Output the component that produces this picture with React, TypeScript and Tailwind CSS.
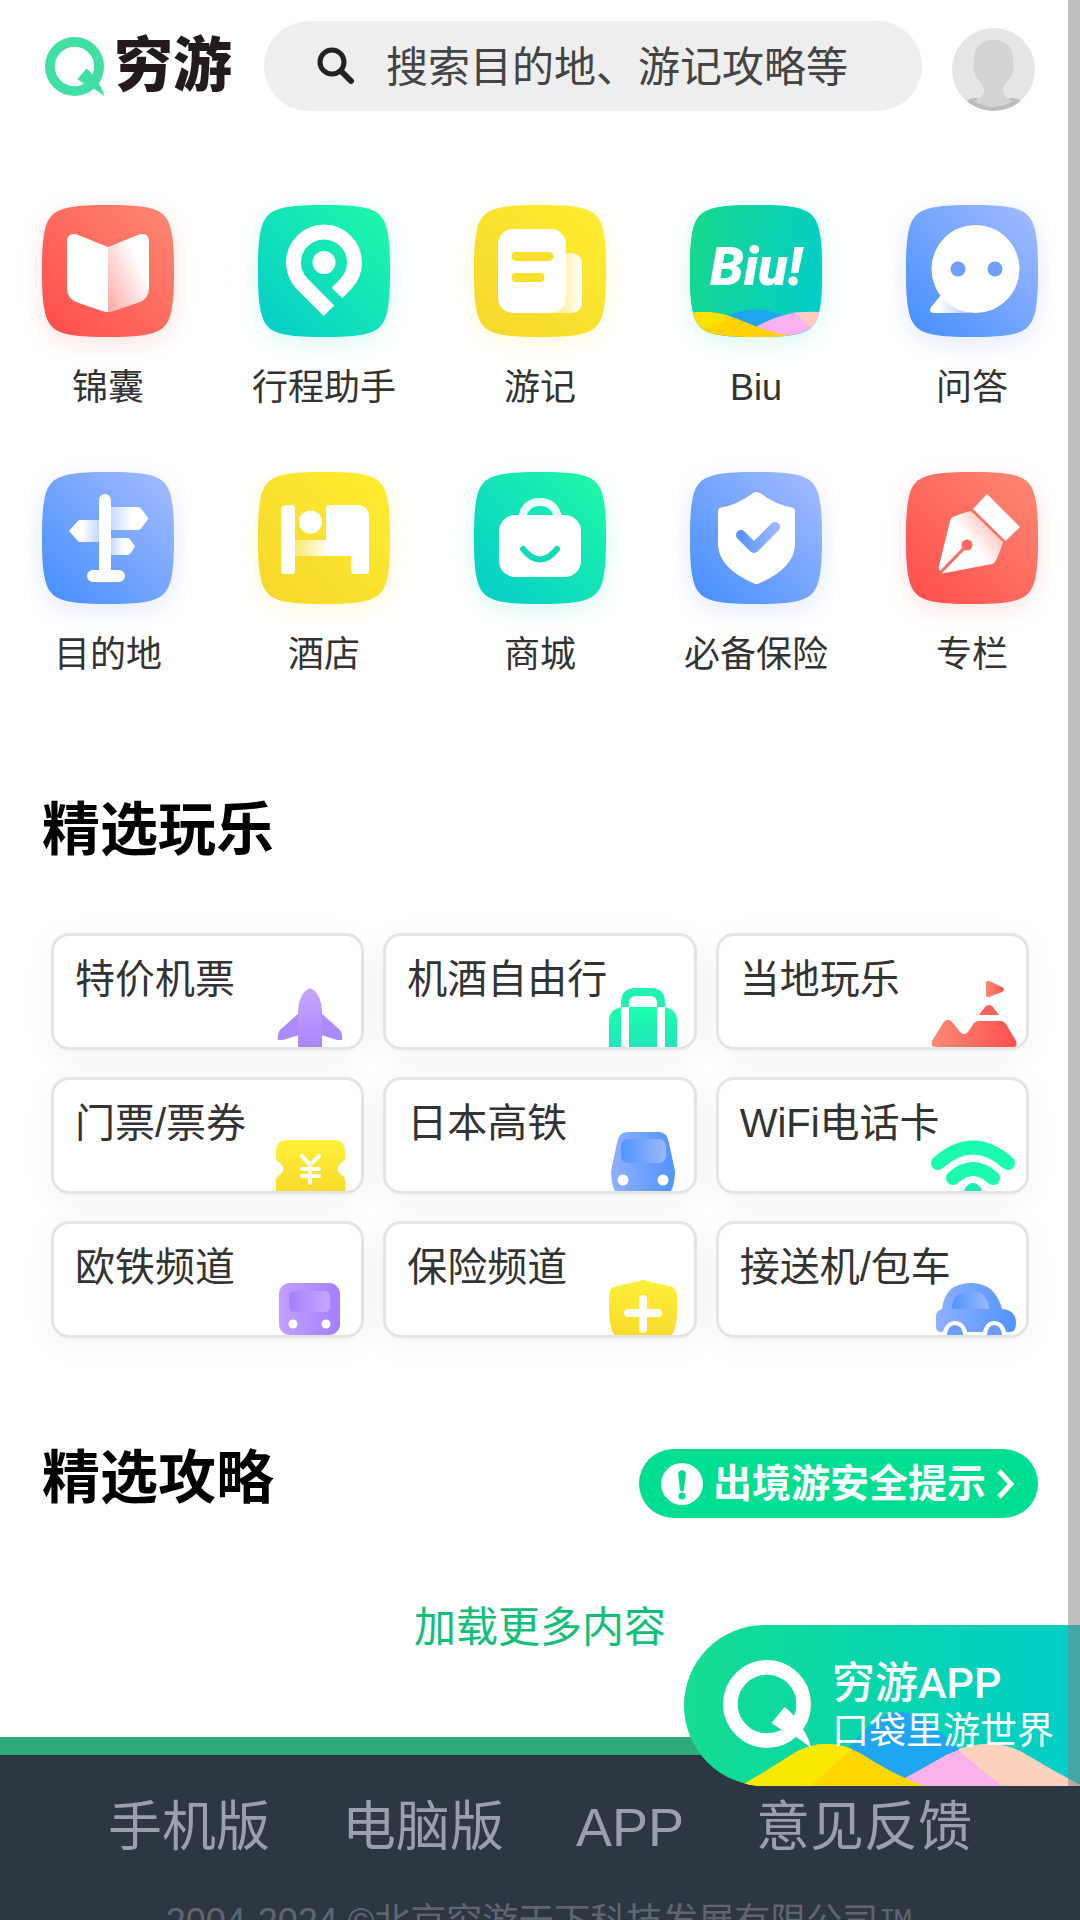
import { useState, type ReactNode } from 'react'

const SQUIRCLE =
  'M66 0C82 0 94 0.5 102 2C120 4.5 127.5 12 130 30C131.5 38 132 50 132 66C132 82 131.5 94 130 102C127.5 120 120 127.5 102 130C94 131.5 82 132 66 132C50 132 38 131.5 30 130C12 127.5 4.5 120 2 102C0.5 94 0 82 0 66C0 50 0.5 38 2 30C4.5 12 12 4.5 30 2C38 0.5 50 0 66 0Z'

const TONES = {
  red: { from: '#ff4b4b', to: '#fd8a72', shadow: 'drop-shadow-[0_6px_12px_rgba(255,75,75,0.16)]' },
  green: { from: '#06cbcb', to: '#1ffaa6', shadow: 'drop-shadow-[0_6px_12px_rgba(10,220,180,0.16)]' },
  yellow: { from: '#f6d52c', to: '#ffee30', shadow: 'drop-shadow-[0_6px_12px_rgba(250,220,40,0.18)]' },
  blue: { from: '#438eff', to: '#a5bcff', shadow: 'drop-shadow-[0_6px_12px_rgba(80,110,255,0.16)]' },
}

type Tone = keyof typeof TONES

const ENTRIES: Array<{ key: string; label: string; tone: Tone; art: ReactNode }> = [
  {
    key: 'guide',
    label: '锦囊',
    tone: 'red',
    art: (
      <>
        <defs>
          <linearGradient id="book-page" x1="0.1" y1="0.9" x2="0.9" y2="0.2">
            <stop offset="0" stopColor="#ffb4b2" />
            <stop offset="0.8" stopColor="#fff" />
          </linearGradient>
        </defs>
        <path d="M66 42L35 29.500Q25 27 25 37V83Q25 93 34 97L60 106Q63 107 66 107Z" fill="#fff" />
        <path d="M66 42L97 29.500Q107 27 107 37V83Q107 93 98 97L72 106Q69 107 66 107Z" fill="url(#book-page)" />
      </>
    ),
  },
  {
    key: 'plan',
    label: '行程助手',
    tone: 'green',
    art: (
      <>
        <path d="M79 88L87.6 79.1A30.500 30.500 0 1 0 44.4 79.1L71 105.7" fill="none" stroke="#fff" strokeWidth="15" />
        <circle cx="66" cy="57.500" r="11.500" fill="#fff" />
      </>
    ),
  },
  {
    key: 'notes',
    label: '游记',
    tone: 'yellow',
    art: (
      <>
        <defs>
          <linearGradient id="note-back" x1="0" x2="1">
            <stop offset="0.45" stopColor="#fff0a0" />
            <stop offset="1" stopColor="#fff" />
          </linearGradient>
        </defs>
        <rect x="70" y="48" width="38" height="60" rx="10" fill="url(#note-back)" />
        <rect x="24" y="24" width="68" height="84" rx="15" fill="#fff" />
        <path d="M42 51.500H75M42 72.500H66" stroke="#f9df2b" strokeWidth="9" strokeLinecap="round" />
      </>
    ),
  },
  {
    key: 'biu',
    label: 'Biu',
    tone: 'green',
    art: (
      <>
        <defs>
          <linearGradient id="biu-bg" x1="0" y1="0.4" x2="1" y2="0.6">
            <stop offset="0" stopColor="#16d88f" />
            <stop offset="1" stopColor="#06cdc9" />
          </linearGradient>
          <clipPath id="biu-clip">
            <path d={SQUIRCLE} />
          </clipPath>
        </defs>
        <g clipPath="url(#biu-clip)">
          <path d="M0 0H132V132H0Z" fill="url(#biu-bg)" />
          <path d="M34 112Q64 97 98 112L70 126Z" fill="#1ea6ee" />
          <path d="M62 124Q92 107 114 107H132V132H80Z" fill="#fbb0f0" />
          <path d="M104 108Q118 106 132 107V132L118 120Q111 113 104 108Z" fill="#fdccc0" />
          <path d="M0 108Q22 105 42 112C64 120 80 129 108 132H0Z" fill="#ffd200" />
          <path d="M0 108Q22 105 42 112Q28 122 8 124Z" fill="#fbe000" />
        </g>
        <text
          x="66"
          y="80"
          textAnchor="middle"
          fill="#fff"
          className="font-['Roboto',sans-serif] text-[54px] font-black italic"
        >
          Biu!
        </text>
      </>
    ),
  },
  {
    key: 'ask',
    label: '问答',
    tone: 'blue',
    art: (
      <>
        <defs>
          <linearGradient id="ask-tail" x1="0" x2="1">
            <stop offset="0.2" stopColor="#fff" />
            <stop offset="1" stopColor="#a9c8ff" />
          </linearGradient>
        </defs>
        <path d="M35 90L25 102Q22 108 29 108H64Z" fill="url(#ask-tail)" />
        <circle cx="69.500" cy="64" r="44" fill="#fff" />
        <circle cx="52" cy="64" r="7.500" fill="#6f9ffb" />
        <circle cx="89" cy="64" r="7.500" fill="#6f9ffb" />
      </>
    ),
  },
  {
    key: 'place',
    label: '目的地',
    tone: 'blue',
    art: (
      <>
        <defs>
          <linearGradient id="sign-right" x1="0" x2="1">
            <stop offset="0" stopColor="#fff" stopOpacity="0.5" />
            <stop offset="0.6" stopColor="#fff" />
          </linearGradient>
          <linearGradient id="sign-left" x1="1" x2="0">
            <stop offset="0" stopColor="#fff" stopOpacity="0.5" />
            <stop offset="0.6" stopColor="#fff" />
          </linearGradient>
        </defs>
        <path d="M66 35H96Q98 35 99.500 37L106.500 46.500L99.500 56Q98 58 96 58H66Z" fill="url(#sign-right)" />
        <path d="M66 66H86Q88 66 93 74.500Q88 83 86 83H66Z" fill="url(#sign-right)" />
        <path d="M60 48H38Q36 48 35 50L27 59L35 68Q36 70 38 70H60Z" fill="url(#sign-left)" />
        <path d="M63 28V100M51 104H77" stroke="#fff" strokeWidth="12" strokeLinecap="round" />
      </>
    ),
  },
  {
    key: 'hotel',
    label: '酒店',
    tone: 'yellow',
    art: (
      <>
        <defs>
          <linearGradient id="bed-base" x1="0" x2="1">
            <stop offset="0" stopColor="#fae868" />
            <stop offset="1" stopColor="#fff" />
          </linearGradient>
        </defs>
        <path d="M36 68H72V84H36Z" fill="url(#bed-base)" />
        <path d="M23 36Q25 33 30 33H34Q37 33 37 36V99Q37 102 34 102H26Q23 102 23 99Z" fill="#fff" />
        <circle cx="52.500" cy="50" r="11.500" fill="#fff" />
        <path d="M68 68V36Q68 33 72 33H98Q111 33 111 45V99Q111 102 108 102H96Q93 102 93 99V84H68Z" fill="#fff" />
      </>
    ),
  },
  {
    key: 'mall',
    label: '商城',
    tone: 'green',
    art: (
      <>
        <path d="M48 50V46Q51 30 66 30Q81 30 84 46V50" fill="none" stroke="#fff" strokeOpacity="0.9" strokeWidth="8" />
        <rect x="25" y="43" width="82" height="62" rx="16" fill="#fff" />
        <path d="M49 77Q66 98 83 77" fill="none" stroke="#11dbb6" strokeWidth="6" strokeLinecap="round" />
      </>
    ),
  },
  {
    key: 'insure',
    label: '必备保险',
    tone: 'blue',
    art: (
      <>
        <defs>
          <linearGradient id="check-line" x1="0" x2="1">
            <stop offset="0" stopColor="#5996ff" />
            <stop offset="1" stopColor="#9bb6ff" />
          </linearGradient>
        </defs>
        <path
          d="M63 21Q66.500 19 70 21Q86 33 102 35.500Q105 36 105 39V73Q104 96 70 111Q66.500 113 63 111Q29 96 28 73V39Q28 36 31 35.500Q47 33 63 21Z"
          fill="#fff"
        />
        <path d="M51 63L64 76L85 55" fill="none" stroke="url(#check-line)" strokeWidth="10" strokeLinecap="round" strokeLinejoin="round" />
      </>
    ),
  },
  {
    key: 'column',
    label: '专栏',
    tone: 'red',
    art: (
      <>
        <defs>
          <linearGradient id="nib" x1="0.95" y1="0.15" x2="0.5" y2="0.5">
            <stop offset="0" stopColor="#ffb3ad" />
            <stop offset="1" stopColor="#fff" />
          </linearGradient>
        </defs>
        <path d="M65 39Q53 42 47 45Q45 46 44 49L33 94Q32 97 34.500 99.500L36 101.500L86 92Q88 91.500 89 90Q95 78 97 70Z" fill="url(#nib)" />
        <path d="M81 22L114 55L99.500 69L67 37Z" fill="#fff" />
        <path d="M34 101L61 73" stroke="#fd6a60" strokeWidth="3" />
        <circle cx="61" cy="73" r="5.500" fill="#fd6a60" />
      </>
    ),
  },
]

// card art sits in a 102x70 box glued to the bottom right corner
const CHANNELS: Array<{ key: string; label: string; art: ReactNode }> = [
  {
    key: 'flight',
    label: '特价机票',
    art: (
      <>
        <path d="M40 36L21 53Q18 57 19 63H24L40 58ZM62 36L81 53Q84 57 83 63H78L62 58Z" fill="#ad8bff" />
        <path d="M39 70V34Q40 16 51 11Q62 16 63 34V70Z" fill="url(#purple-v)" />
      </>
    ),
  },
  {
    key: 'package',
    label: '机酒自由行',
    art: (
      <>
        <path d="M33 30V26Q33 15 44 15H58Q69 15 69 26V30" fill="none" stroke="#1ff3b0" strokeWidth="8" />
        <path d="M29 30V70H17V43Q17 33 29 30ZM37 30H65V70H37ZM73 30Q85 33 85 43V70H73Z" fill="url(#green-v)" />
      </>
    ),
  },
  {
    key: 'local',
    label: '当地玩乐',
    art: (
      <>
        <path d="M62 6Q62 3 65 4L78 10Q82 12.500 78 15L65 20Q62 21 62 18Z" fill="url(#red-h)" />
        <path d="M55 38L61 30Q65 26 69 30L75 38Z" fill="#fc6158" />
        <path d="M8 64L19 46Q23 40 28 45L36 55Q40 59 44 55L50 46Q52 44 55 44H77Q80 44 82 47L92 64Q94 70 89 70H12Q6 70 8 64Z" fill="url(#red-h)" />
      </>
    ),
  },
  {
    key: 'ticket',
    label: '门票/票券',
    art: (
      <>
        <path
          d="M17 70V60Q17 55 21 54Q28 48 21 42Q17 40 17 36V31Q17 19 28 19H75Q86 19 86 31V36Q86 40 82 42Q75 48 82 54Q86 55 86 60V70Z"
          fill="url(#yellow-v)"
        />
        <path d="M43 35L51 44L60 35M43 48H60M43 55H60M51 45V62" fill="none" stroke="#fff" strokeWidth="4" strokeLinecap="round" />
      </>
    ),
  },
  {
    key: 'jrail',
    label: '日本高铁',
    art: (
      <>
        <path d="M25 22Q27 11 35 11H67Q75 11 77 22L83 50Q83 62 79 70H23Q19 62 19 50Z" fill="url(#blue-h)" />
        <rect x="29" y="18" width="45" height="24" rx="7" fill="url(#blue-glass)" />
        <circle cx="31" cy="59" r="5.500" fill="#fff" />
        <circle cx="71" cy="59" r="5.500" fill="#fff" />
      </>
    ),
  },
  {
    key: 'wifi',
    label: 'WiFi电话卡',
    art: (
      <>
        <path d="M14 42Q49 11 84 42M29 57Q49 39 69 57" fill="none" stroke="#1bfbae" strokeWidth="14" strokeLinecap="round" />
        <path d="M40 70Q43 62 49 62Q55 62 58 70Z" fill="#1be9b6" />
      </>
    ),
  },
  {
    key: 'erail',
    label: '欧铁频道',
    art: (
      <>
        <rect x="20" y="18" width="61" height="52" rx="11" fill="url(#purple-h)" />
        <rect x="30" y="26" width="41" height="21" rx="5" fill="url(#purple-glass)" />
        <circle cx="34" cy="59" r="4.500" fill="#fff" />
        <circle cx="67" cy="59" r="4.500" fill="#fff" />
      </>
    ),
  },
  {
    key: 'cover',
    label: '保险频道',
    art: (
      <>
        <path d="M47 16Q51 14 55 16L77 21Q85 22 85 31V46Q85 60 80 70H22Q17 60 17 46V31Q17 22 25 21Z" fill="url(#yellow-v)" />
        <path d="M51 34V64M36 48H66" stroke="#fff" strokeWidth="8" strokeLinecap="round" />
      </>
    ),
  },
  {
    key: 'car',
    label: '接送机/包车',
    art: (
      <>
        <path d="M18 44Q21 18 47 18Q71 18 78 44Q92 45 92 58Q92 67 86 67H18Q12 67 12 62V51Q12 46 18 44Z" fill="url(#blue-h)" />
        <path d="M28 44Q28 28 44 27H52Q64 29 65 44Z" fill="url(#blue-glass)" />
        <path d="M18 70Q21 56 31 56Q41 56 44 70ZM58 70Q61 56 70 56Q80 56 83 70Z" fill="#fff" />
        <path d="M23 70Q24 60 31 60Q38 60 39 70ZM63 70Q64 60 70 60Q77 60 78 70Z" fill="#6e9dff" />
      </>
    ),
  },
]

const FOOT_LINKS = ['手机版', '电脑版', 'APP', '意见反馈']

function SharedGradients() {
  const defs = [
    { id: 'purple-v', a: '#c6a6ff', b: '#aa86ff', v: true },
    { id: 'green-v', a: '#1bffac', b: '#22e3bb', v: true },
    { id: 'yellow-v', a: '#fff03a', b: '#f8db2b', v: true },
    { id: 'red-h', a: '#fc8a74', b: '#ff5050', v: false },
    { id: 'blue-h', a: '#8fb0ff', b: '#5094ff', v: false },
    { id: 'blue-glass', a: '#5094ff', b: '#9ab8ff', v: false },
    { id: 'purple-h', a: '#c2a0ff', b: '#a47fff', v: false },
    { id: 'purple-glass', a: '#a680ff', b: '#c6a6ff', v: false },
  ]
  return (
    <svg className="absolute size-0" aria-hidden="true">
      <defs>
        {defs.map(d => (
          <linearGradient key={d.id} id={d.id} x1="0" y1="0" x2={d.v ? 0 : 1} y2={d.v ? 1 : 0}>
            <stop offset="0" stopColor={d.a} />
            <stop offset="1" stopColor={d.b} />
          </linearGradient>
        ))}
      </defs>
    </svg>
  )
}

function QMark({ className }: { className: string }) {
  return (
    <svg viewBox="0 0 60 60" className={className} aria-hidden="true">
      <circle cx="30" cy="30" r="25" fill="none" stroke="currentColor" strokeWidth="10" />
      <path d="M42 32L33 43Q38 47 45 50Q53 54 60 60Q58 50 51 43Q50 38 42 32Z" fill="currentColor" />
    </svg>
  )
}

function Tile({ tone, id, children }: { tone: Tone; id: string; children: ReactNode }) {
  const t = TONES[tone]
  return (
    <svg viewBox="0 0 132 132" className={`size-[132px] overflow-visible ${t.shadow}`} aria-hidden="true">
      <defs>
        <linearGradient id={`bg-${id}`} x1="0" y1="1" x2="1" y2="0">
          <stop offset="0" stopColor={t.from} />
          <stop offset="1" stopColor={t.to} />
        </linearGradient>
      </defs>
      <path d={SQUIRCLE} fill={`url(#bg-${id})`} />
      {children}
    </svg>
  )
}

function Header() {
  const [keyword, setKeyword] = useState('')
  return (
    <header className="flex items-center px-[45px] pt-[21px]">
      <a href="#home" className="flex shrink-0 items-center gap-[10px]">
        <QMark className="size-[59px] text-[#40e0a5]" />
        <span className="text-[59px] leading-[90px] font-black text-[#231a1c]">穷游</span>
      </a>
      <label className="ml-8 flex h-[90px] flex-1 items-center gap-[31px] rounded-full bg-[#eeeeee] pl-[53px]">
        <svg viewBox="0 0 38 38" className="size-[38px] shrink-0" fill="none" stroke="#222" aria-hidden="true">
          <circle cx="15" cy="15" r="12" strokeWidth="5" />
          <path d="M24 24L34 34" strokeWidth="6" strokeLinecap="round" />
        </svg>
        <input
          type="search"
          aria-label="搜索"
          value={keyword}
          onChange={e => setKeyword(e.target.value)}
          placeholder="搜索目的地、游记攻略等"
          className="w-full min-w-0 bg-transparent pt-0.5 text-[42px] text-[#444] outline-none placeholder:text-[#444]"
        />
      </label>
      <a href="#me" aria-label="我的" className="ml-[30px] shrink-0 self-end">
        <svg viewBox="0 0 84 84" className="block size-[83px]" aria-hidden="true">
          <defs>
            <clipPath id="avatar">
              <circle cx="42" cy="42" r="42" />
            </clipPath>
          </defs>
          <g clipPath="url(#avatar)">
            <path d="M0 0H84V84H0Z" fill="#e5e5e5" />
            <path d="M14 74Q20 70 26 71Q42 86 58 71Q64 70 70 74V84H14Z" fill="#bdbdbd" />
            <path d="M42 12Q62 13 62 34Q64 46 57 53Q50 60 52 66Q55 72 62 74Q42 86 22 74Q29 72 32 66Q34 60 27 53Q20 46 22 34Q22 13 42 12Z" fill="#d3d3d3" />
          </g>
        </svg>
      </a>
    </header>
  )
}

function AppBanner() {
  return (
    <a
      href="#app"
      className="fixed right-0 bottom-[134px] flex h-[161px] w-[396px] items-start overflow-hidden rounded-l-full bg-linear-to-r from-[#15dd90] to-[#06cdca] text-white"
    >
      <svg viewBox="0 0 396 161" className="absolute inset-0 size-full" aria-hidden="true">
        <path d="M160 128Q192 87 216 87Q240 87 278 128L222 156Z" fill="#1ea6f2" />
        <path d="M205 161Q222 153 262 130Q286 119 304 119Q322 119 336 126Q366 144 396 160V161Z" fill="#fbb2ea" />
        <path d="M274 124Q290 119 304 119Q322 119 336 126Q366 144 396 160V161H318Q298 146 274 124Z" fill="#fdd2bd" />
        <path d="M56 161Q76 150 104 132Q122 119 142 119Q160 119 176 128Q210 150 240 161Z" fill="#ffd600" />
        <path d="M56 161Q76 150 104 132Q122 119 142 119Q156 119 168 124L126 161Z" fill="#fbe800" />
      </svg>
      <QMark className="relative mt-[35px] ml-[39px] size-[88px] shrink-0" />
      <span className="relative mt-8 ml-[21px] font-['Roboto','Noto_Sans_CJK_SC',sans-serif] whitespace-nowrap">
        <span className="block text-[43px] leading-[52px] font-medium">穷游APP</span>
        <span className="block text-[37px] leading-[46px]">口袋里游世界</span>
      </span>
    </a>
  )
}

export default function App() {
  return (
    <div className="h-screen overflow-hidden bg-white font-['Liberation_Sans','Noto_Sans_CJK_SC',sans-serif] text-[#333]">
      <SharedGradients />
      <Header />

      <nav aria-label="频道" className="mt-[94px] grid grid-cols-5 gap-y-[57px]">
        {ENTRIES.map(e => (
          <a key={e.key} href={`#${e.key}`} className="flex flex-col items-center">
            <Tile tone={e.tone} id={e.key}>
              {e.art}
            </Tile>
            <span className="mt-6 text-[36px] leading-[54px]">{e.label}</span>
          </a>
        ))}
      </nav>

      <section className="mt-[108px]">
        <h2 className="px-[42px] text-[58px] leading-[80px] font-bold text-black">精选玩乐</h2>
        <div className="mt-[63px] grid grid-cols-3 gap-x-[19px] gap-y-[27px] px-[51px]">
          {CHANNELS.map(c => (
            <a
              key={c.key}
              href={`#${c.key}`}
              className="relative h-[117px] rounded-[18px] border-3 border-[#e4e4e4] bg-white pt-[13px] pl-[21px] shadow-[0_6px_36px_rgba(0,0,0,0.05)]"
            >
              <svg viewBox="0 0 102 70" className="absolute right-0 bottom-0 h-[70px] w-[102px]" aria-hidden="true">
                {c.art}
              </svg>
              <span className="relative block text-[40px] leading-[60px] whitespace-nowrap">{c.label}</span>
            </a>
          ))}
        </div>
      </section>

      <section className="mt-[100px]">
        <div className="flex items-end justify-between px-[42px]">
          <h2 className="text-[58px] leading-[80px] font-bold text-black">精选攻略</h2>
          <a href="#safety" className="flex h-[69px] items-center rounded-full bg-[#00de91] px-[22px] text-white">
            <svg viewBox="0 0 42 42" className="size-[42px]" aria-hidden="true">
              <circle cx="21" cy="21" r="21" fill="#fff" />
              <path d="M17 10Q21 4 25 10L23 27Q21 30 19 27Z" fill="#00de91" />
              <circle cx="21" cy="33" r="3.500" fill="#00de91" />
            </svg>
            <span className="ml-[10px] text-[39px] leading-[60px] font-bold">出境游安全提示</span>
            <svg viewBox="0 0 20 32" className="ml-[10px] h-8 w-5" fill="none" stroke="#fff" strokeWidth="5" aria-hidden="true">
              <path d="M3 3L15 16L3 29" />
            </svg>
          </a>
        </div>
        <button type="button" className="mx-auto mt-20 block text-[42px] leading-[60px] text-[#11bf79]">
          加载更多内容
        </button>
      </section>

      <footer className="mt-[79px] border-t-18 border-[#2dab7a] bg-[#2d3742] pt-8 pb-16">
        <div className="flex justify-center gap-[72px] text-[54px] leading-[80px] text-[#9a9fae]">
          {FOOT_LINKS.map(l => (
            <a key={l} href="#footer">
              {l}
            </a>
          ))}
        </div>
        <p className="mt-7 text-center text-[36px] leading-[54px] text-[#5f6672]">2004-2024 ©北京穷游天下科技发展有限公司™</p>
      </footer>

      <AppBanner />
      {/* scroll thumb */}
      <div className="pointer-events-none fixed top-0 right-0 bottom-[134px] w-3 bg-[#808080]/50" />
    </div>
  )
}
